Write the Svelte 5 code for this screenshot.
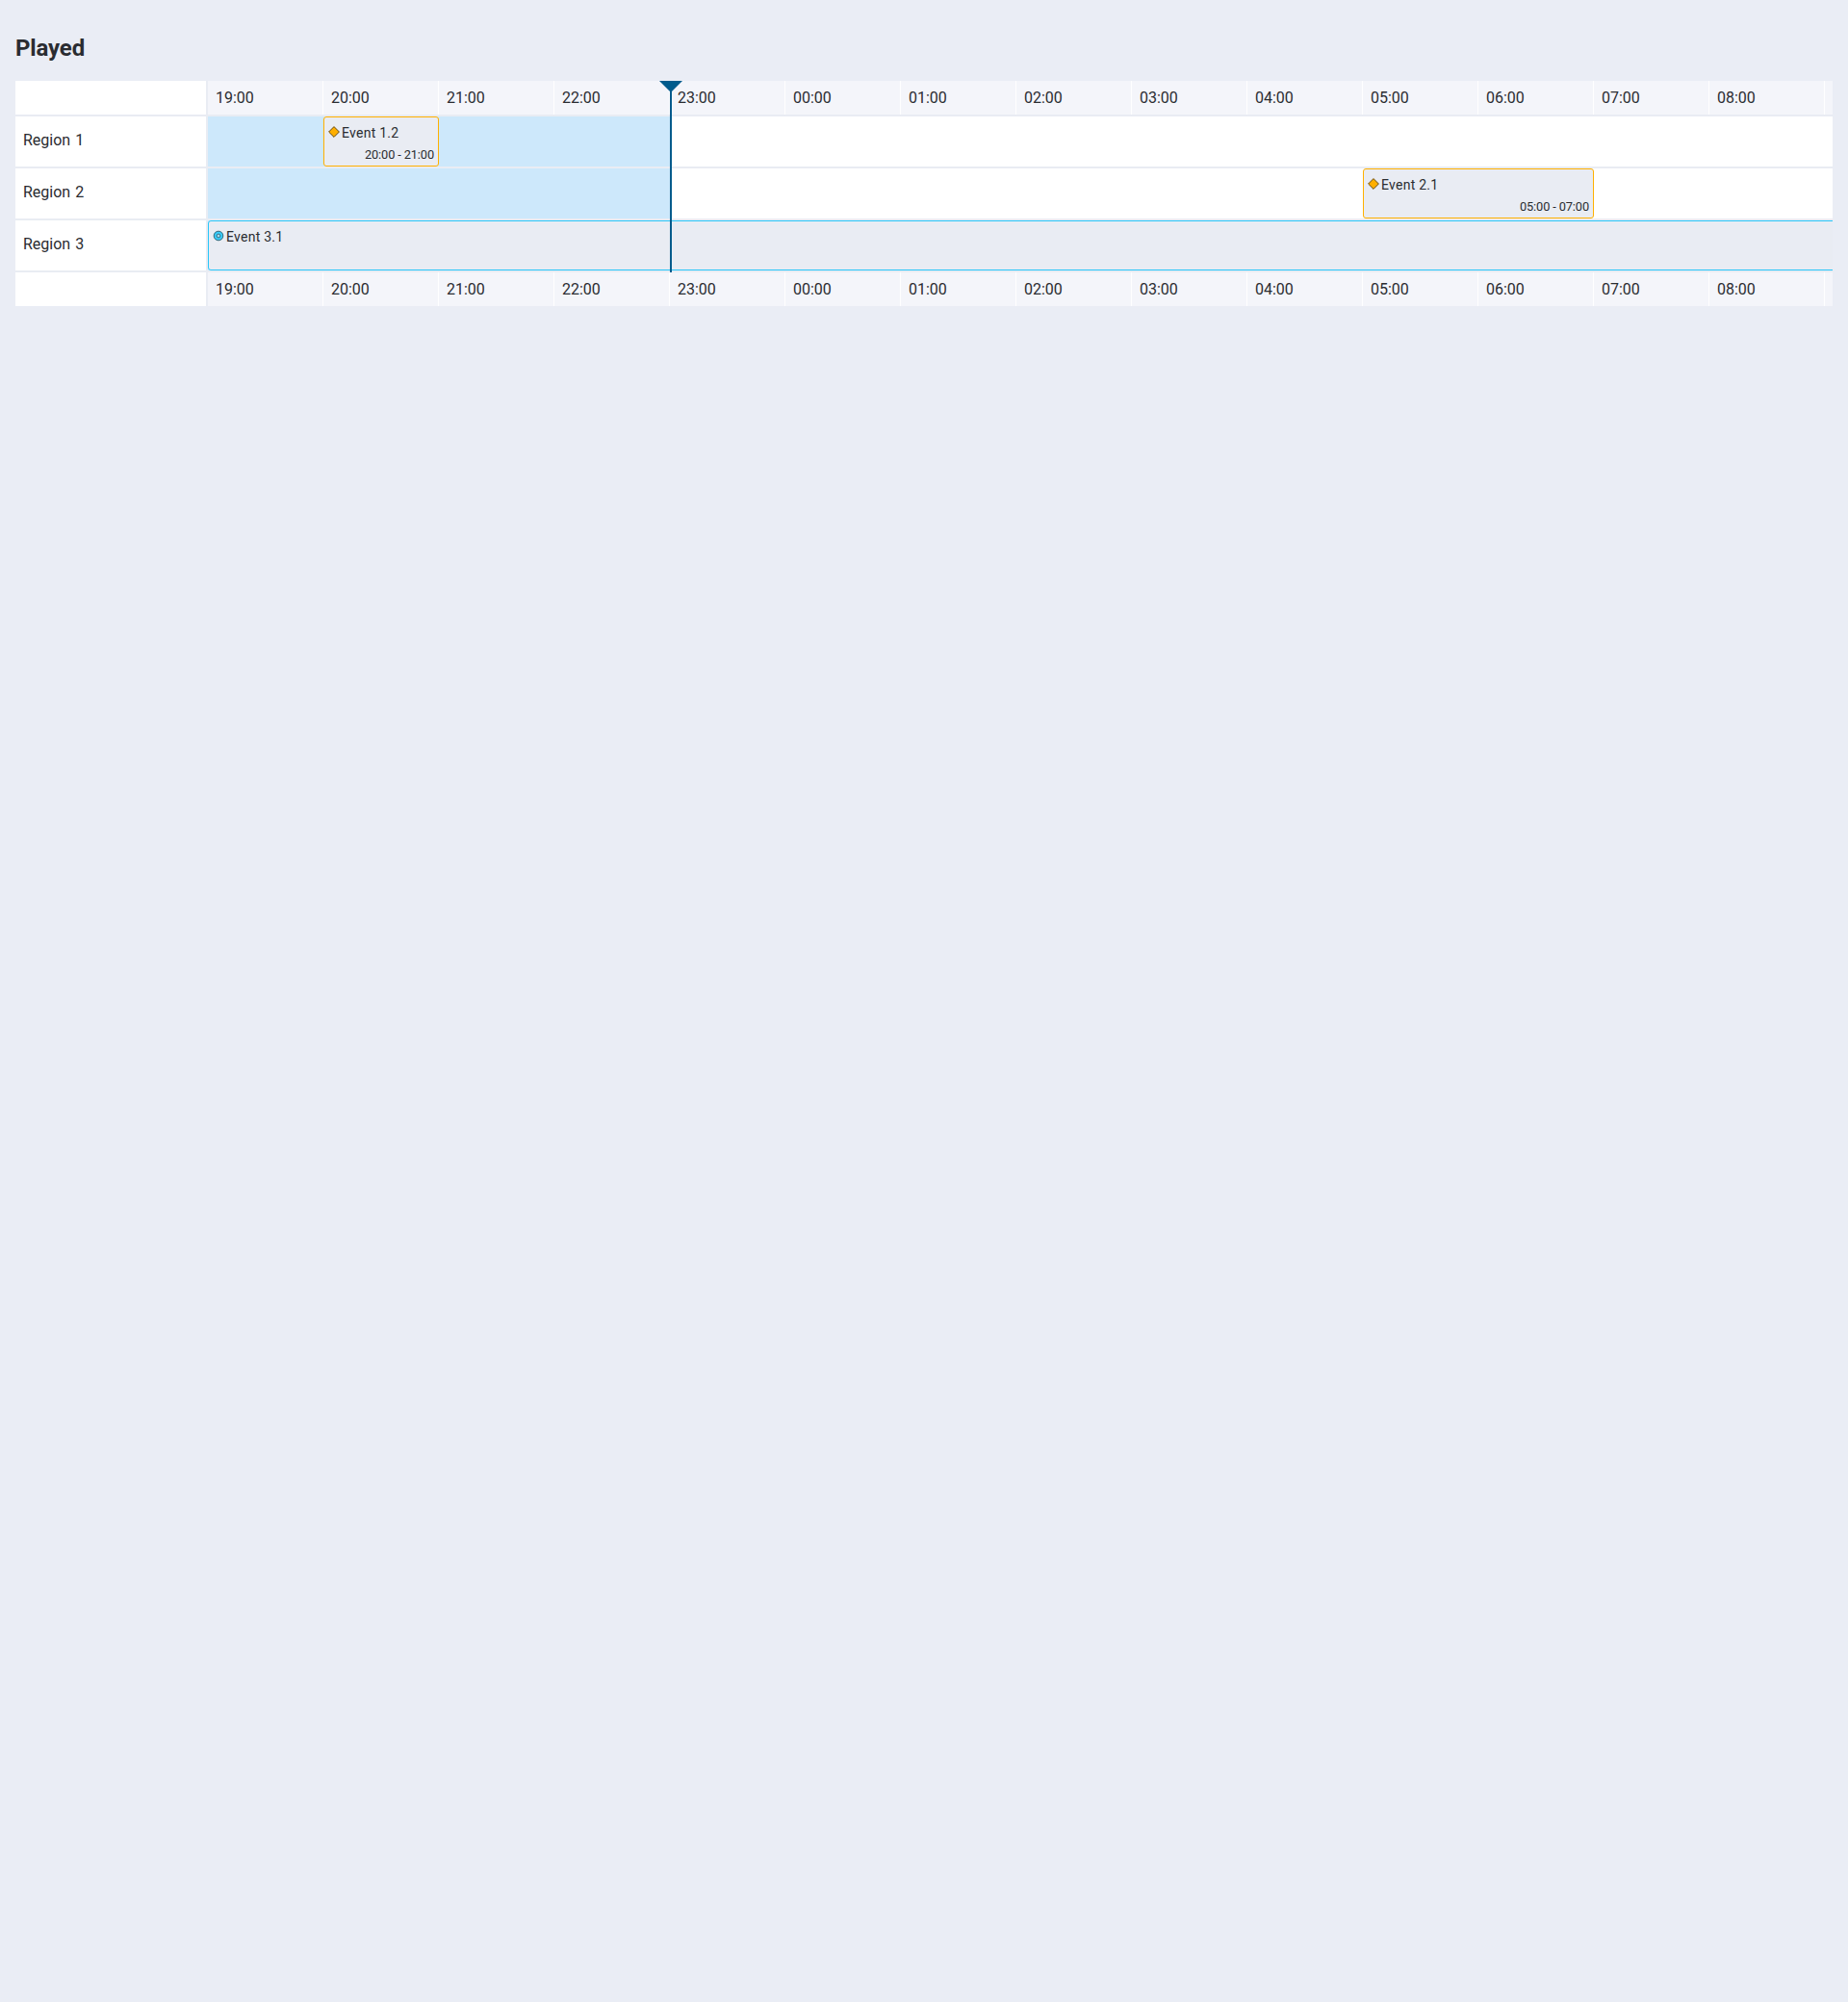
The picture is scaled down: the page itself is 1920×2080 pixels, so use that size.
<script>
  const HOUR_WIDTH = 120;
  const hours = Array.from({ length: 14 }, (_, i) => `${String((19 + i) % 24).padStart(2, '0')}:00`);
  const rows = [
    { label: 'Region 1', event: { title: 'Event 1.2', time: '20:00 - 21:00', start: 1, length: 1, kind: 'warning' } },
    { label: 'Region 2', event: { title: 'Event 2.1', time: '05:00 - 07:00', start: 10, length: 2, kind: 'warning' } },
    { label: 'Region 3', event: { title: 'Event 3.1', time: '', start: 0, length: 24, kind: 'info' } }
  ];
</script>

{#snippet timeHeader()}
  <div class="row scale">
    <div class="label"></div>
    <div class="track">
      {#each hours as hour}
        <div class="hour">{hour}</div>
      {/each}
    </div>
  </div>
{/snippet}

<main>
  <h2>Played</h2>
  <section class="timeline">
    {@render timeHeader()}
    {#each rows as row}
      <div class="row">
        <div class="label">{row.label}</div>
        <div class="track lane">
          <div class="played"></div>
          <article
            class="event {row.event.kind}"
            style:left="{row.event.start * HOUR_WIDTH}px"
            style:width="{row.event.length * HOUR_WIDTH}px"
          >
            <div class="title">
              {#if row.event.kind === 'warning'}
                <svg width="12" height="12" viewBox="0 0 12 12"><path d="M6 .6 11.4 6 6 11.4.6 6Z" fill="#ffaf00" stroke="#644a18" stroke-linejoin="round" /></svg>
              {:else}
                <svg width="12" height="12" viewBox="0 0 12 12"><circle cx="6" cy="6" r="4.8" fill="#38ccfb" stroke="#2a5a6b" stroke-width=".9" /><circle cx="6" cy="6" r="1.9" fill="#a5dcee" stroke="#2a5a6b" stroke-width=".8" /></svg>
              {/if}
              <span>{row.event.title}</span>
            </div>
            <div class="time">{row.event.time}</div>
          </article>
        </div>
      </div>
    {/each}
    {@render timeHeader()}
    <div class="now"></div>
  </section>
</main>

<style>
  :global(body) {
    background: #eaedf5;
  }
  main {
    padding: 34px 16px 0;
    font: 16px/24px Roboto, sans-serif;
    color: #2a2c31;
  }
  h2 {
    margin: 0 0 18px;
    font-size: 24px;
    line-height: 32px;
    font-weight: 700;
    letter-spacing: -0.15px;
  }
  .timeline {
    position: relative;
    display: flex;
    flex-direction: column;
    gap: 2px;
    overflow: hidden;
    background: #e9ecf3;
  }
  .row {
    display: grid;
    grid-template-columns: 198px 1fr;
    gap: 2px;
    height: 52px;
  }
  .scale {
    height: 35px;
  }
  .label {
    display: flex;
    align-items: center;
    box-sizing: border-box;
    padding: 0 8px 3px;
    background: #fff;
    word-spacing: 1.2px;
  }
  .track {
    display: flex;
    overflow: hidden;
    background: #f4f5fa;
  }
  .lane {
    position: relative;
    background: #fff;
  }
  .hour {
    flex: 0 0 120px;
    box-sizing: border-box;
    padding: 6px 8px 5px;
    border-right: 1px solid #fff;
  }
  .played {
    width: 480px;
    background: #cde8fb;
  }
  .event {
    position: absolute;
    top: 0;
    display: flex;
    flex-direction: column;
    justify-content: space-between;
    box-sizing: border-box;
    height: 52px;
    padding: 6px 4px 3px;
    border: 1px solid #ffb000;
    border-radius: 3px;
    background: #e9ecf3;
  }
  .info {
    border-color: #28c6f9;
  }
  .title {
    display: flex;
    gap: 2px;
    font-size: 14px;
    line-height: 20px;
    letter-spacing: 0.25px;
  }
  svg {
    flex: none;
    margin-top: 3px;
  }
  .time {
    font-size: 12.8px;
    line-height: 16px;
    letter-spacing: -0.12px;
    text-align: right;
  }
  .now {
    position: absolute;
    top: 0;
    left: 680px;
    width: 2px;
    height: 199px;
    background: #005b8c;
  }
  .now::before {
    content: '';
    position: absolute;
    top: 0;
    left: -11px;
    border: 12px solid transparent;
    border-top-color: #005b8c;
    border-bottom: 0;
  }
</style>
